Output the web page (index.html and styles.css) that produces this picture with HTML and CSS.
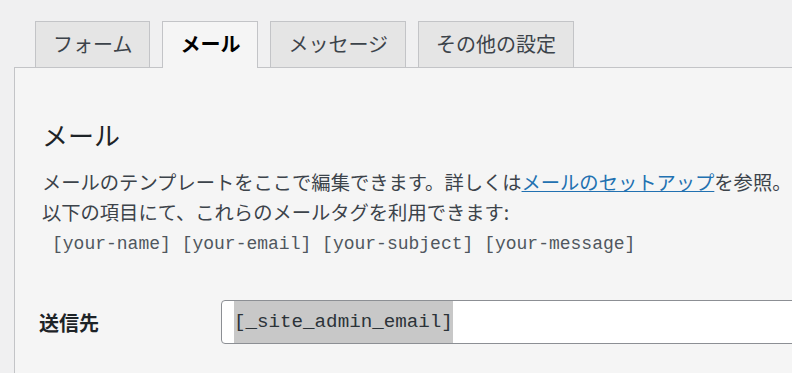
FILE: index.html
```html
<!DOCTYPE html>
<html lang="ja">
<head>
    <meta charset="UTF-8">
    <title>メール</title>
    <link rel="stylesheet" href="styles.css">
</head>
<body>
    <div class="wrap">
        <nav class="tabs">
            <a class="tab">フォーム</a>
            <a class="tab active">メール</a>
            <a class="tab">メッセージ</a>
            <a class="tab">その他の設定</a>
        </nav>

        <div class="panel">
            <h2 class="panel-title">メール</h2>
            <p class="desc">メールのテンプレートをここで編集できます。詳しくは<a class="link" href="#">メールのセットアップ</a>を参照。</p>
            <p class="desc">以下の項目にて、これらのメールタグを利用できます:</p>
            <p class="mailtags"><code>[your-name]</code> <code>[your-email]</code> <code>[your-subject]</code> <code>[your-message]</code></p>

            <div class="field-row">
                <label class="field-label">送信先</label>
                <div class="field-input"><span class="selected">[_site_admin_email]</span></div>
            </div>
        </div>
    </div>
</body>
</html>
```

FILE: styles.css
```css
html, body {
    overflow: hidden;
}
body {
    margin: 0;
    background: #f0f0f1;
    color: #3c434a;
    font-family: "Noto Sans CJK JP", "Noto Sans", sans-serif;
}
.wrap {
    width: 1000px;
    padding: 21px 0 0 14px;
}
.tabs {
    display: flex;
    gap: 12px;
    padding-left: 21px;
}
.tab {
    display: block;
    padding: 0 17px;
    height: 45px;
    line-height: 44px;
    font-size: 20px;
    color: #3c434a;
    background: #e5e5e5;
    border: 1px solid #c3c4c7;
    border-bottom: none;
    white-space: nowrap;
}
.tab.active {
    background: #f5f5f5;
    color: #000;
    font-weight: 700;
    height: 46px;
    margin-bottom: -1px;
    position: relative;
}
.panel {
    background: #f5f5f5;
    border: 1px solid #c3c4c7;
    padding: 54px 27px 40px;
}
.panel-title {
    margin: 0 0 19px;
    font-size: 26px;
    line-height: 26px;
    font-weight: 400;
    color: #1d2327;
}
.desc {
    margin: 0;
    font-size: 19.3px;
    line-height: 30px;
    white-space: nowrap;
}
.link {
    color: #2271b1;
    text-decoration: underline;
}
.mailtags {
    margin: 0;
    padding: 2px 0 0 10px;
    line-height: 30px;
    font-family: "Liberation Mono", "DejaVu Sans Mono", monospace;
    font-size: 18px;
    color: #50575e;
    white-space: nowrap;
}
.mailtags code {
    font-family: inherit;
}
.field-row {
    display: flex;
    align-items: center;
    margin: 41px 0 0 -3px;
}
.field-label {
    width: 182px;
    font-size: 20px;
    font-weight: 700;
    color: #1d2327;
}
.field-input {
    flex: 1;
    height: 42px;
    display: flex;
    align-items: stretch;
    padding-left: 12px;
    background: #fff;
    border: 1px solid #8c8f94;
    border-radius: 4px;
}
.selected {
    display: flex;
    align-items: center;
    background: #c8c8c8;
    color: #2c3338;
    font-family: "Liberation Mono", "DejaVu Sans Mono", monospace;
    font-size: 19.2px;
}
```
